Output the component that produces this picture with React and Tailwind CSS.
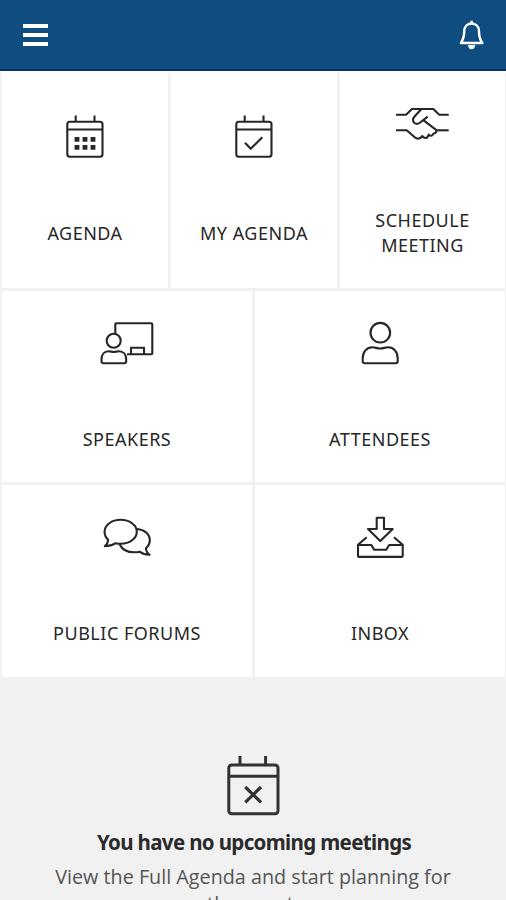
import React from 'react'

const Icon = ({ w, h, className = '', strokeWidth = 2.1, children }) => (
  <svg
    width={w}
    height={h}
    viewBox={`0 0 ${w} ${h}`}
    fill="none"
    stroke="currentColor"
    strokeWidth={strokeWidth}
    strokeLinejoin="round"
    className={`shrink-0 overflow-visible ${className}`}
  >
    {children}
  </svg>
)

const CalendarFrame = () => (
  <>
    <rect x="1.3" y="6.8" width="35.2" height="35" rx="2.5" />
    <path d="M1.3 14.5H36.5M9.7 0.5V6.5M28.5 0.5V6.5" />
  </>
)

const AgendaIcon = () => (
  <Icon w={38} h={43}>
    <CalendarFrame />
    <path
      d="M8.6 21.9h4.8v4.8h-4.8zM16.6 21.9h4.8v4.8h-4.8zM24.6 21.9h4.8v4.8h-4.8zM8.6 29.9h4.8v4.8h-4.8zM16.6 29.9h4.8v4.8h-4.8zM24.6 29.9h4.8v4.8h-4.8z"
      fill="currentColor"
      stroke="none"
    />
  </Icon>
)

const MyAgendaIcon = () => (
  <Icon w={38} h={43}>
    <CalendarFrame />
    <path d="M10 27.8L15.7 33.8L27.3 22.3" />
  </Icon>
)

const HandshakeIcon = () => (
  <Icon w={53} h={33}>
    <path d="M0 7.7H10L16 2H37.3L43.3 7.7H52.7" />
    <path d="M25 2.5L18.5 9.5C16.5 12 16.8 14.5 18.5 16C20 17.2 22 17 23.5 16L31.7 9.7" />
    <path d="M27.3 13.2L39.5 22.3C41.3 24 40 26.6 37.5 26.5C36.5 29.3 34 29.3 32.6 27.6C32 31.5 28.5 32 26.2 29C24.5 32 21 32.2 19 30.5L10.7 23.3H0" />
    <path d="M40.3 23.3H52.7" />
  </Icon>
)

const SpeakersIcon = () => (
  <Icon w={54} h={44}>
    <path d="M15.3 12.5V3.3Q15.3 2.3 16.3 2.3H51.3Q52.3 2.3 52.3 3.3V32.3Q52.3 33.3 51.3 33.3H27" />
    <path d="M31 33.3V26.7H44V33.3" />
    <circle cx="13.7" cy="19.7" r="7" />
    <path d="M3.5 42.3Q1.5 42.3 1.5 40.3V38.5C1.5 33.5 4.5 30.3 8.5 30.3C10.5 30.3 11.8 31 13.8 31C15.8 31 17 30.3 19 30.3C23.2 30.3 26.2 33.5 26.2 38.5V40.3Q26.2 42.3 24.2 42.3Z" />
  </Icon>
)

const AttendeesIcon = () => (
  <Icon w={38} h={44}>
    <circle cx="19.3" cy="11.7" r="9.8" />
    <path d="M3.7 42.3Q1.7 42.3 1.7 40.3V37.5C1.7 30.8 5.8 26.3 11.3 26.3C14.3 26.3 16 27.5 19.2 27.5C22.4 27.5 24.2 26.3 27.2 26.3C32.6 26.3 36.7 30.8 36.7 37.5V40.3Q36.7 42.3 34.7 42.3Z" />
  </Icon>
)

const ForumsIcon = () => (
  <Icon w={48} h={38}>
    <path d="M5.2 21.8C2.8 19.6 1.6 16.8 1.6 13.7C1.6 7 8.7 1.8 17.6 1.8S33.8 7 33.8 13.7S26.6 25.8 17.7 25.8C15.8 25.8 14.2 25.6 12.8 25.2C9.5 27.3 5.8 28.3 1.8 28.3C3.8 26.5 5 24.5 5.2 21.8Z" />
    <path d="M34 11C41.3 11.6 46.8 16 46.8 22.2C46.8 25.3 45.4 28 43 30.2C43 32.8 44.3 35.2 46.6 36.8C42.8 36.9 39.3 35.8 36.5 33.7C35 34.1 33 34.3 31.2 34.3C24.5 34.3 19 31.4 16.6 26.2" />
  </Icon>
)

const InboxIcon = () => (
  <Icon w={49} h={43}>
    <path d="M20.7 2.7H28V14H36.7L24.3 26L12 14H20.7Z" />
    <path d="M10.7 22.3L2 29.8V40.9Q2 41.9 3 41.9H45.7Q46.7 41.9 46.7 40.9V29.8L38 22.3" />
    <path d="M2 30H15.3L18.2 34.7H30.3L33.2 30H46.7" />
  </Icon>
)

const NoMeetingsIcon = () => (
  <Icon w={54} h={60} strokeWidth={3}>
    <rect x="2.8" y="9" width="49.2" height="48.7" rx="3" />
    <path d="M2.8 20.2H52M14 0V9M39.6 0V9" />
    <path d="M19.3 31L35 46.3M35 31L19.3 46.3" strokeWidth="3.2" />
  </Icon>
)

const BellIcon = () => (
  <Icon w={26} h={30} strokeWidth={2.5} className="text-white">
    <path d="M12.6 3.5C8 3.5 5.2 7 5.2 11.5C5.2 17.5 4.3 19.5 1.9 22.9H23.3C20.9 19.5 20 17.5 20 11.5C20 7 17.2 3.5 12.6 3.5Z" />
    <path d="M12.6 0.7V4" />
    <path d="M9 25H16.2C16 27.8 14.6 29.3 12.6 29.3S9.2 27.8 9 25Z" fill="currentColor" stroke="none" />
  </Icon>
)

const Tile = ({ icon, label, className = '', labelClassName = 'mt-[62px]' }) => (
  <button className={`flex flex-col items-center bg-white text-[#262626] ${className}`}>
    <span className="flex h-11 items-start justify-center">{icon}</span>
    <span
      className={`whitespace-pre-line text-center text-[18px] leading-[25px] tracking-[0.5px] ${labelClassName}`}
    >
      {label}
    </span>
  </button>
)

const App = () => {
  return (
    <div className="h-[900px] w-[506px] overflow-hidden bg-[#f1f1f1] font-['Noto_Sans',sans-serif]">
      <header className="flex h-[71px] items-start justify-between border-b-2 border-[#062f6b] bg-[#0f4d80] pl-[23px] pr-[21px]">
        <button className="mt-6 flex flex-col gap-[5px]">
          <span className="h-1 w-[25px] bg-white" />
          <span className="h-1 w-[25px] bg-white" />
          <span className="h-1 w-[25px] bg-white" />
        </button>
        <button className="mt-5">
          <BellIcon />
        </button>
      </header>

      <main className="border-t-2 border-[#fcfcfd] pl-0.5 pr-px">
        <div className="grid h-[215px] grid-cols-[166px_166px_165px] gap-[3px]">
          <Tile icon={<AgendaIcon />} label="AGENDA" className="pt-[42px]" />
          <Tile icon={<MyAgendaIcon />} label="MY AGENDA" className="pt-[42px]" />
          <Tile
            icon={<HandshakeIcon />}
            label={'SCHEDULE\nMEETING'}
            className="pt-[34px]"
            labelClassName="mt-[57px]"
          />
        </div>
        <div className="mt-[3px] grid h-[191px] grid-cols-[250px_250px] gap-[3px]">
          <Tile icon={<SpeakersIcon />} label="SPEAKERS" className="pt-[30px]" />
          <Tile icon={<AttendeesIcon />} label="ATTENDEES" className="pt-[30px]" />
        </div>
        <div className="mt-[3px] grid h-[192px] grid-cols-[250px_250px] gap-[3px]">
          <Tile icon={<span className="pt-[3px]"><ForumsIcon /></span>} label="PUBLIC FORUMS" className="pt-[30px]" />
          <Tile icon={<InboxIcon />} label="INBOX" className="pt-[30px]" />
        </div>
      </main>

      <section className="flex flex-col items-center pt-[79px] text-[#333]">
        <NoMeetingsIcon />
        <h2 className="mt-[13px] whitespace-nowrap pl-0.5 text-[20.5px] font-bold leading-[26px] tracking-[-0.65px] text-[#2b2b2b]">
          You have no upcoming meetings
        </h2>
        <p className="mt-2 w-[420px] text-center font-['Open_Sans','Noto_Sans',sans-serif] text-[19.75px] leading-[27px] text-[#555]">
          View the Full Agenda and start planning for the event.
        </p>
      </section>
    </div>
  )
}

export default App
